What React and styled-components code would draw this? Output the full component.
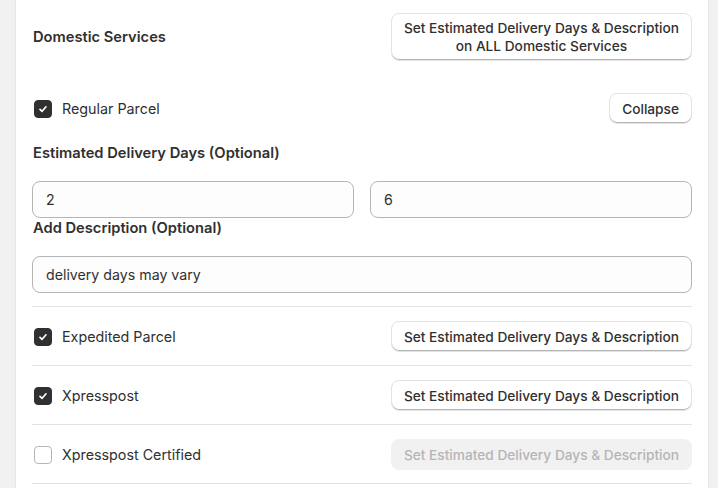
import styled, { createGlobalStyle, css } from "styled-components";

const GlobalStyle = createGlobalStyle`
  html, body {
    margin: 0;
    padding: 0;
    background: #f1f1f1;
    font-family: Inter, "Noto Sans", sans-serif;
    color: #303030;
    -webkit-font-smoothing: antialiased;
  }
`;

const Page = styled.div`
  padding: 0 9px 0 15px;
  height: 488px;
  overflow: hidden;
`;

const Card = styled.div`
  background: #ffffff;
  border-left: 1px solid #e6e6e6;
  border-right: 1px solid #e6e6e6;
  padding: 13px 16px 0;
  min-height: 488px;
  box-sizing: border-box;
`;

const Header = styled.div`
  display: flex;
  justify-content: space-between;
  align-items: center;
  margin-bottom: 32px;
`;

const Heading = styled.h2`
  margin: 0;
  font-size: 14.7px;
  font-weight: 600;
  line-height: 20px;
  padding-left: 1px;
`;

const Button = styled.button`
  font-family: inherit;
  font-size: 13.7px;
  font-weight: 500;
  line-height: 18px;
  color: #303030;
  background: #ffffff;
  border: 1px solid #e3e3e3;
  border-radius: 8px;
  box-shadow: inset 0 -1px 0 #b5b5b5;
  padding: ${(p) => (p.$tall ? "5px 12px 6px" : "0 12px")};
  height: ${(p) => (p.$tall ? "48px" : "31px")};
  text-align: center;
  cursor: pointer;
  white-space: nowrap;

  ${(p) =>
    p.disabled &&
    css`
      background: #f1f1f1;
      border-color: #f1f1f1;
      box-shadow: none;
      color: #b5b5b5;
      cursor: default;
    `}
`;

const ServiceRow = styled.div`
  display: flex;
  justify-content: space-between;
  align-items: center;
  padding: ${(p) => (p.$first ? "0" : "14px 0 13px")};
  border-bottom: ${(p) => (p.$first ? "none" : "1px solid #e3e3e3")};
`;

const CheckLabel = styled.label`
  display: flex;
  align-items: center;
  gap: 10px;
  font-size: 14.3px;
  line-height: 20px;
  padding-left: 2px;
`;

const Box = styled.span`
  width: 18px;
  height: 18px;
  box-sizing: border-box;
  border-radius: 4px;
  display: flex;
  align-items: center;
  justify-content: center;
  background: ${(p) => (p.$checked ? "#303030" : "#ffffff")};
  border: 1px solid ${(p) => (p.$checked ? "#303030" : "#b5b5b5")};
`;

const Details = styled.div`
  padding-top: 19px;
  padding-bottom: 13px;
  border-bottom: 1px solid #e3e3e3;
`;

const FieldLabel = styled.div`
  font-size: 14.7px;
  font-weight: 600;
  line-height: 20px;
  padding-left: 1px;
  margin-bottom: ${(p) => p.$gap || 0}px;
`;

const InputPair = styled.div`
  display: grid;
  grid-template-columns: 1fr 1fr;
  gap: 16px;
`;

const Input = styled.input`
  font-family: inherit;
  font-size: 14.2px;
  color: #303030;
  height: 37px;
  box-sizing: border-box;
  width: 100%;
  padding: 0 13px;
  border: 1px solid #b5b5b5;
  border-radius: 8px;
  background: #fdfdfd;
  outline: none;
`;

function Check({ checked }) {
  return (
    <Box $checked={checked}>
      {checked && (
        <svg width="12" height="12" viewBox="0 0 12 12">
          <path
            d="M3 6.3 L5.1 8.3 L9 3.8"
            fill="none"
            stroke="#fff"
            strokeWidth="1.7"
            strokeLinecap="round"
            strokeLinejoin="round"
          />
        </svg>
      )}
    </Box>
  );
}

const services = [
  { name: "Expedited Parcel", checked: true },
  { name: "Xpresspost", checked: true },
  { name: "Xpresspost Certified", checked: false },
];

export default function App() {
  return (
    <Page>
      <GlobalStyle />
      <Card>
        <Header>
          <Heading>Domestic Services</Heading>
          <Button $tall>
            Set Estimated Delivery Days &amp; Description
            <br />
            on ALL Domestic Services
          </Button>
        </Header>

        <ServiceRow $first>
          <CheckLabel>
            <Check checked />
            Regular Parcel
          </CheckLabel>
          <Button>Collapse</Button>
        </ServiceRow>

        <Details>
          <FieldLabel $gap={18}>Estimated Delivery Days (Optional)</FieldLabel>
          <InputPair>
            <Input defaultValue="2" />
            <Input defaultValue="6" />
          </InputPair>
          <FieldLabel $gap={18}>Add Description (Optional)</FieldLabel>
          <Input defaultValue="delivery days may vary" />
        </Details>

        {services.map((s) => (
          <ServiceRow key={s.name}>
            <CheckLabel>
              <Check checked={s.checked} />
              {s.name}
            </CheckLabel>
            <Button disabled={!s.checked}>
              Set Estimated Delivery Days &amp; Description
            </Button>
          </ServiceRow>
        ))}
      </Card>
    </Page>
  );
}
